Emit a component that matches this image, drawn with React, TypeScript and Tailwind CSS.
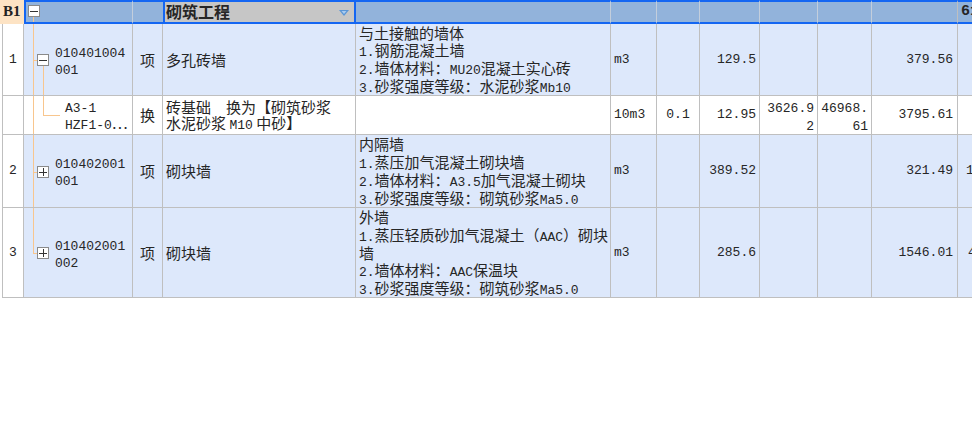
import React from "react";

const GRID =
  "grid grid-cols-[24px_109px_30px_193px_255px_46px_43px_60px_58px_54px_86px_100px]";

const LINE = "border-[#bfbfbf]";
const BLUE = "border-[#1466f2]";
const HSEP = "border-r border-r-[#c3cedc]";

function T({ s }: { s: string }) {
  const parts = s.split(/([\x21-\x7e](?:[\x20-\x7e]*[\x21-\x7e])?)/);
  return (
    <>
      {parts.map((p, i) =>
        i % 2 === 1 ? (
          <span key={i} className="font-['Liberation_Mono',monospace] text-[13px] leading-none">
            {p}
          </span>
        ) : (
          <React.Fragment key={i}>{p}</React.Fragment>
        )
      )}
    </>
  );
}

function Box({ plus, cls }: { plus?: boolean; cls: string }) {
  return (
    <div
      className={`absolute w-[12px] h-[12px] border border-[#8a8a8a] bg-white flex items-center justify-center ${cls}`}
    >
      <div className="relative w-[8px] h-[8px] flex items-center justify-center">
        <div className="w-[8px] h-px bg-[#333]" />
        {plus && <div className="absolute left-[3.5px] top-0 w-px h-[8px] bg-[#333]" />}
      </div>
    </div>
  );
}

function Lines({ lines, cls = "" }: { lines: string[]; cls?: string }) {
  return (
    <div className={cls}>
      {lines.map((l, i) => (
        <div key={i} className="whitespace-pre">
          <T s={l} />
        </div>
      ))}
    </div>
  );
}

const M = "font-['Liberation_Mono',monospace] text-[13px]";

export default function App() {
  const cell = `border-r border-b ${LINE} flex items-center overflow-hidden`;
  return (
    <div className="w-[972px] h-[424px] overflow-hidden bg-white text-[15px] leading-[17.5px] text-[#262626] font-['Noto_Sans_CJK_SC','Liberation_Sans',sans-serif]">
      <div className="w-[1058px]">
        {/* Header */}
        <div className={`${GRID} h-[24px]`}>
          <div className="bg-[#fde3c4] flex items-center pl-[3px] font-bold text-[15px] font-['Liberation_Serif',serif] text-[#222]">
            B1
          </div>
          <div className={`relative bg-[#92b3db] border-l-2 border-y-2 ${BLUE} ${HSEP}`}>
            <Box cls="left-[2px] top-[3px]" />
            <div className="absolute left-[7px] top-[15px] bottom-0 w-px bg-[#f8c68e]" />
          </div>
          <div className={`bg-[#92b3db] border-y-2 ${BLUE}`} />
          <div className={`relative bg-[#c6c6c6] border-2 ${BLUE} flex items-center pl-[1px] font-bold text-[16px]`}>
            砌筑工程
            <svg
              className="absolute right-[5px] top-[8px]"
              width="10"
              height="6"
              viewBox="0 0 10 6"
            >
              <path d="M0 0 L10 0 L5 6 Z" fill="#5b96d6" />
              <path d="M2.5 1 L7.5 1 L5 4 Z" fill="#a9cbef" />
            </svg>
          </div>
          <div className={`bg-[#92b3db] border-y-2 ${BLUE} ${HSEP}`} />
          <div className={`bg-[#92b3db] border-y-2 ${BLUE} ${HSEP}`} />
          <div className={`bg-[#92b3db] border-y-2 ${BLUE} ${HSEP}`} />
          <div className={`bg-[#92b3db] border-y-2 ${BLUE} ${HSEP}`} />
          <div className={`bg-[#92b3db] border-y-2 ${BLUE} ${HSEP}`} />
          <div className={`bg-[#92b3db] border-y-2 ${BLUE} ${HSEP}`} />
          <div className={`bg-[#92b3db] border-y-2 ${BLUE} border-r border-r-[#bfbfbf]`} />
          <div className={`bg-[#92b3db] border-y-2 ${BLUE} flex items-center pl-[3px] font-bold text-[15px] font-['Liberation_Mono',monospace]`}>
            61
          </div>
        </div>

        {/* Row 1 */}
        <div className={`${GRID} h-[72px]`}>
          <div className={`${cell} ${M} ml-[2px] border-l bg-white justify-center`}>1</div>
          <div className={`${cell} relative bg-[#dde8fb] pl-[31px]`}>
            <div className="absolute left-[9px] top-0 bottom-0 w-px bg-[#f8c68e]" />
            <div className="absolute left-[9px] top-[36px] w-[4px] h-px bg-[#f8c68e]" />
            <div className="absolute left-[19px] top-[42px] bottom-0 w-px bg-[#f8c68e]" />
            <Box cls="left-[13px] top-[30px]" />
            <Lines lines={["010401004", "001"]} cls="leading-[16px]" />
          </div>
          <div className={`${cell} bg-[#dde8fb] justify-center`}>项</div>
          <div className={`${cell} bg-[#dde8fb] pl-[3px]`}>多孔砖墙</div>
          <div className={`${cell} bg-[#dde8fb] pl-[3px]`}>
            <Lines
              lines={[
                "与土接触的墙体",
                "1.钢筋混凝土墙",
                "2.墙体材料：MU20混凝土实心砖",
                "3.砂浆强度等级：水泥砂浆Mb10",
              ]}
            />
          </div>
          <div className={`${cell} ${M} bg-[#dde8fb] pl-[3px]`}>m3</div>
          <div className={`${cell} bg-[#dde8fb]`} />
          <div className={`${cell} ${M} bg-[#dde8fb] justify-end pr-[3px]`}>129.5</div>
          <div className={`${cell} bg-[#dde8fb]`} />
          <div className={`${cell} bg-[#dde8fb]`} />
          <div className={`${cell} ${M} bg-[#dde8fb] justify-end pr-[4px]`}>379.56</div>
          <div className={`${cell} bg-[#dde8fb]`} />
        </div>

        {/* Sub row */}
        <div className={`${GRID} h-[39px]`}>
          <div className={`${cell} ml-[2px] border-l bg-white`} />
          <div className={`${cell} relative bg-white pl-[41px]`}>
            <div className="absolute left-[9px] top-0 bottom-0 w-px bg-[#f8c68e]" />
            <div className="absolute left-[19px] top-0 h-[19px] w-px bg-[#f8c68e]" />
            <div className="absolute left-[19px] top-[19px] w-[17px] h-px bg-[#f8c68e]" />
            <Lines lines={["A3-1", "HZF1-0…"]} cls="leading-[16px]" />
          </div>
          <div className={`${cell} bg-white justify-center`}>换</div>
          <div className={`${cell} bg-white pl-[3px]`}>
            <Lines lines={["砖基础\u3000换为【砌筑砂浆", "水泥砂浆 M10 中砂】"]} cls="leading-[16px]" />
          </div>
          <div className={`${cell} bg-white`} />
          <div className={`${cell} ${M} bg-white pl-[3px]`}>10m3</div>
          <div className={`${cell} ${M} bg-white justify-center`}>0.1</div>
          <div className={`${cell} ${M} bg-white justify-end pr-[3px]`}>12.95</div>
          <div className={`border-r border-b ${LINE} bg-white overflow-hidden pr-[3px] pt-[1px]`}>
            <Lines lines={["3626.9", "2"]} cls="text-right leading-[17px]" />
          </div>
          <div className={`border-r border-b ${LINE} bg-white overflow-hidden pr-[3px] pt-[1px]`}>
            <Lines lines={["46968.", "61"]} cls="text-right leading-[17px]" />
          </div>
          <div className={`${cell} ${M} bg-white justify-end pr-[4px]`}>3795.61</div>
          <div className={`${cell} bg-white`} />
        </div>

        {/* Row 2 */}
        <div className={`${GRID} h-[73px]`}>
          <div className={`${cell} ${M} ml-[2px] border-l bg-white justify-center`}>2</div>
          <div className={`${cell} relative bg-[#dde8fb] pl-[31px]`}>
            <div className="absolute left-[9px] top-0 bottom-0 w-px bg-[#f8c68e]" />
            <div className="absolute left-[9px] top-[37px] w-[4px] h-px bg-[#f8c68e]" />
            <Box plus cls="left-[13px] top-[31px]" />
            <Lines lines={["010402001", "001"]} cls="leading-[16px]" />
          </div>
          <div className={`${cell} bg-[#dde8fb] justify-center`}>项</div>
          <div className={`${cell} bg-[#dde8fb] pl-[3px]`}>砌块墙</div>
          <div className={`${cell} bg-[#dde8fb] pl-[3px]`}>
            <Lines
              lines={[
                "内隔墙",
                "1.蒸压加气混凝土砌块墙",
                "2.墙体材料：A3.5加气混凝土砌块",
                "3.砂浆强度等级：砌筑砂浆Ma5.0",
              ]}
            />
          </div>
          <div className={`${cell} ${M} bg-[#dde8fb] pl-[3px]`}>m3</div>
          <div className={`${cell} bg-[#dde8fb]`} />
          <div className={`${cell} ${M} bg-[#dde8fb] justify-end pr-[3px]`}>389.52</div>
          <div className={`${cell} bg-[#dde8fb]`} />
          <div className={`${cell} bg-[#dde8fb]`} />
          <div className={`${cell} ${M} bg-[#dde8fb] justify-end pr-[4px]`}>321.49</div>
          <div className={`${cell} ${M} bg-[#dde8fb] pl-[8px]`}>1</div>
        </div>

        {/* Row 3 */}
        <div className={`${GRID} h-[90px]`}>
          <div className={`${cell} ${M} ml-[2px] border-l bg-white justify-center`}>3</div>
          <div className={`${cell} relative bg-[#dde8fb] pl-[31px]`}>
            <div className="absolute left-[9px] top-0 h-[46px] w-px bg-[#f8c68e]" />
            <div className="absolute left-[9px] top-[45px] w-[4px] h-px bg-[#f8c68e]" />
            <Box plus cls="left-[13px] top-[39px]" />
            <Lines lines={["010402001", "002"]} cls="leading-[16px]" />
          </div>
          <div className={`${cell} bg-[#dde8fb] justify-center`}>项</div>
          <div className={`${cell} bg-[#dde8fb] pl-[3px]`}>砌块墙</div>
          <div className={`${cell} bg-[#dde8fb] pl-[3px]`}>
            <Lines
              cls="leading-[17.5px]"
              lines={[
                "外墙",
                "1.蒸压轻质砂加气混凝土（AAC）砌块",
                "墙",
                "2.墙体材料：AAC保温块",
                "3.砂浆强度等级：砌筑砂浆Ma5.0",
              ]}
            />
          </div>
          <div className={`${cell} ${M} bg-[#dde8fb] pl-[3px]`}>m3</div>
          <div className={`${cell} bg-[#dde8fb]`} />
          <div className={`${cell} ${M} bg-[#dde8fb] justify-end pr-[3px]`}>285.6</div>
          <div className={`${cell} bg-[#dde8fb]`} />
          <div className={`${cell} bg-[#dde8fb]`} />
          <div className={`${cell} ${M} bg-[#dde8fb] justify-end pr-[4px]`}>1546.01</div>
          <div className={`${cell} ${M} bg-[#dde8fb] pl-[10px]`}>4</div>
        </div>
      </div>
    </div>
  );
}
